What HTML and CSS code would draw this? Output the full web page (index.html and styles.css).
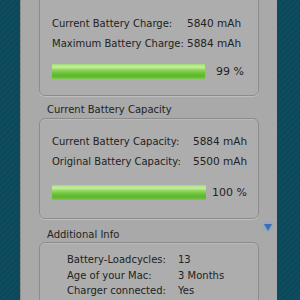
FILE: index.html
```html
<!DOCTYPE html>
<html lang="en">
<head>
    <meta charset="UTF-8">
    <title>Battery Info</title>
    <link rel="stylesheet" href="styles.css">
</head>
<body>
    <div class="panel">
        <!-- Charge -->
        <div class="box box-first">
            <div class="row"><span class="label">Current Battery Charge:</span><span class="value">5840 mAh</span></div>
            <div class="row"><span class="label">Maximum Battery Charge:</span><span class="value">5884 mAh</span></div>
            <div class="meter">
                <div class="bar"><div class="fill" style="width: 99%"></div></div>
                <span class="pct">99 %</span>
            </div>
        </div>

        <!-- Capacity -->
        <div class="section-title">Current Battery Capacity</div>
        <div class="box box-cap">
            <div class="row"><span class="label">Current Battery Capacity:</span><span class="value">5884 mAh</span></div>
            <div class="row"><span class="label">Original Battery Capacity:</span><span class="value">5500 mAh</span></div>
            <div class="meter">
                <div class="bar"><div class="fill" style="width: 100%"></div></div>
                <span class="pct">100 %</span>
            </div>
        </div>

        <!-- Additional -->
        <div class="section-title with-arrow">
            <span>Additional Info</span>
            <span class="arrow"></span>
        </div>
        <div class="box box-info">
            <div class="info-row"><span class="info-label">Battery-Loadcycles:</span><span>13</span></div>
            <div class="info-row"><span class="info-label">Age of your Mac:</span><span>3 Months</span></div>
            <div class="info-row"><span class="info-label">Charger connected:</span><span>Yes</span></div>
        </div>
    </div>
</body>
</html>
```

FILE: styles.css
```css
/* General Reset */
* {
    margin: 0;
    padding: 0;
    box-sizing: border-box;
}

body {
    font-family: "DejaVu Sans", sans-serif;
    font-size: 10px;
    color: #222;
    height: 300px;
    overflow: hidden;
    white-space: nowrap;
    background-color: #0d4a5c;
    background-image: repeating-linear-gradient(135deg, #0e4c5f 0 2px, #0c475a 2px 4px);
}

/* Grey panel */
.panel {
    margin-left: 20px;
    width: 257px;
    height: 300px;
    overflow: hidden;
    background-color: #a9a9a9;
    border-left: 1px solid #8f8f8f;
    padding-left: 18px;
}

/* Rounded group boxes */
.box {
    width: 220px;
    background-color: #adadad;
    border: 1px solid #8c8c8c;
    border-radius: 6px;
    box-shadow: inset 0 1px 0 rgba(255, 255, 255, 0.15), 0 1px 0 rgba(255, 255, 255, 0.25);
}

.box-first {
    margin-top: -8px;
    height: 104px;
    padding: 20px 0 0 12px;
}

.box-cap {
    height: 101px;
    padding: 12px 0 0 12px;
}

.box-info {
    height: 80px;
    padding: 9px 0 0 27px;
}

.row {
    display: flex;
    height: 20px;
    align-items: center;
}

.label {
    width: 135px;
}

.value {
    font-size: 10.5px;
}

.box-cap .label {
    width: 141px;
}

/* Progress bars */
.meter {
    display: flex;
    align-items: center;
    margin-top: 11px;
}

.box-cap .meter {
    margin-top: 14px;
}

.bar {
    width: 155px;
    height: 15px;
}

.box-cap .bar {
    width: 154px;
}

.fill {
    height: 100%;
    background: linear-gradient(#9fdc72 0%, #c6f0a0 20%, #8fd55a 40%, #6cc43a 60%, #5cb52c 80%, #7cc84e 100%);
}

.pct {
    margin-left: 9px;
    font-size: 11px;
}

.box-cap .pct {
    margin-left: 6px;
}

/* Section headings */
.section-title {
    padding-left: 8px;
    height: 22px;
    line-height: 14px;
    padding-top: 7px;
}

.section-title.with-arrow {
    display: flex;
    justify-content: space-between;
    width: 233px;
    height: 23px;
    padding-top: 9px;
}

.arrow {
    width: 0;
    height: 0;
    margin-top: -4px;
    border-left: 4px solid transparent;
    border-right: 4px solid transparent;
    border-top: 7px solid #3c6fb8;
    filter: drop-shadow(0 0 2px #6aa0f0);
}

/* Additional info rows */
.info-row {
    display: flex;
    height: 15.5px;
    align-items: center;
}

.info-label {
    width: 111px;
}
```
